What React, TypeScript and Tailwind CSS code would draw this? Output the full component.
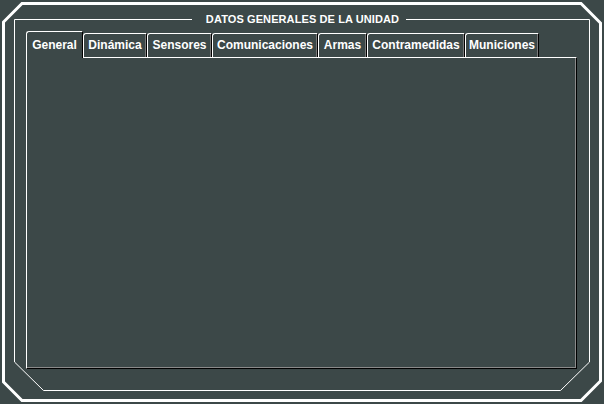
import React from 'react';

const tabs = [
  { label: 'General', width: 57 },
  { label: 'Dinámica', width: 64 },
  { label: 'Sensores', width: 65 },
  { label: 'Comunicaciones', width: 106 },
  { label: 'Armas', width: 49 },
  { label: 'Contramedidas', width: 98 },
  { label: 'Municiones', width: 74 },
];

const Frame: React.FC = () => (
  <svg className="pointer-events-none absolute inset-0" width="604" height="404" viewBox="0 0 604 404">
    <polygon
      points="22,3.5 581,3.5 600.5,23 600.5,381 581,400.5 22,400.5 3.5,382 3.5,22"
      fill="none"
      stroke="#ffffff"
      strokeWidth="3"
    />
    <polyline
      points="192,19.5 14.5,19.5 14.5,362 43.5,390.5 560.5,390.5 589.5,362 589.5,19.5 406,19.5"
      fill="none"
      stroke="#ffffff"
      strokeWidth="1"
    />
  </svg>
);

const App: React.FC = () => {
  const selected = 0;

  return (
    <div className="relative h-[404px] w-[604px] overflow-hidden bg-[#3c4848] font-['Liberation_Sans',Arial,sans-serif] text-white">
      <Frame />
      <div className="relative flex flex-col pl-[26px] pt-[12px]">
        <div className="flex h-[14px] w-[551px] justify-center">
          <span className="ml-[2px] text-[11px] font-bold leading-[14px] tracking-[0.1px]">DATOS GENERALES DE LA UNIDAD</span>
        </div>

        <div className="mt-[5px] flex h-[26px] items-end">
          {tabs.map((tab, i) =>
            i === selected ? (
              <div
                key={tab.label}
                style={{ width: tab.width }}
                className="relative z-10 -mb-px flex h-[27px] justify-center rounded-tl-[3px] border-l border-t border-r border-l-white border-t-white border-r-black bg-[#3c4848] pt-[6px] text-[12px] font-bold leading-[14px]"
              >
                {tab.label}
              </div>
            ) : (
              <div
                key={tab.label}
                style={{ width: tab.width }}
                className="flex h-[24px] justify-center rounded-tl-[3px] border-l border-t border-r border-l-white border-t-white border-r-black pt-[4px] text-[12px] font-bold leading-[14px] shadow-[inset_-1px_0_0_#7a7a7a]"
              >
                {tab.label}
              </div>
            )
          )}
        </div>

        <div className="h-[312px] w-[551px] border-l border-t border-r border-b border-l-white border-t-white border-r-black border-b-black shadow-[inset_-1px_-1px_0_#8a8a8a]" />
      </div>
    </div>
  );
};

export default App;
